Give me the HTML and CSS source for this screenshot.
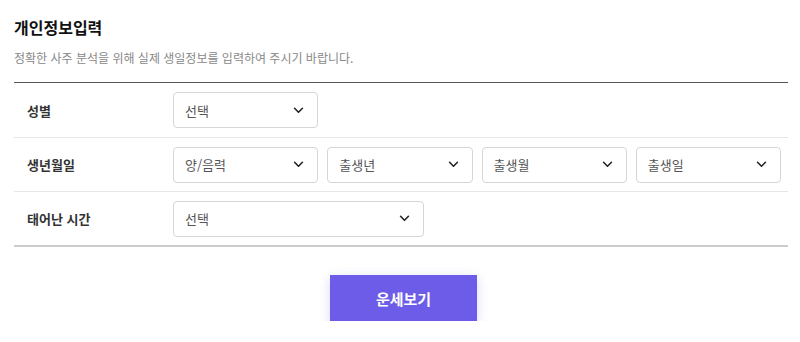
FILE: index.html
```html
<!DOCTYPE html>
<html lang="ko">
<head>
<meta charset="utf-8">
<link rel="stylesheet" href="styles.css">
</head>
<body>
<div class="wrap">
  <h2 class="title">개인정보입력</h2>
  <p class="desc">정확한 사주 분석을 위해 실제 생일정보를 입력하여 주시기 바랍니다.</p>
  <div class="table">
    <div class="row first">
      <div class="label">성별</div>
      <div class="fields">
        <div class="select w1"><span>선택</span><svg viewBox="0 0 12 8" class="chev"><path d="M1.5 1.5 L6 6 L10.5 1.5"/></svg></div>
      </div>
    </div>
    <div class="row">
      <div class="label">생년월일</div>
      <div class="fields four">
        <div class="select"><span>양/음력</span><svg viewBox="0 0 12 8" class="chev"><path d="M1.5 1.5 L6 6 L10.5 1.5"/></svg></div>
        <div class="select"><span>출생년</span><svg viewBox="0 0 12 8" class="chev"><path d="M1.5 1.5 L6 6 L10.5 1.5"/></svg></div>
        <div class="select"><span>출생월</span><svg viewBox="0 0 12 8" class="chev"><path d="M1.5 1.5 L6 6 L10.5 1.5"/></svg></div>
        <div class="select"><span>출생일</span><svg viewBox="0 0 12 8" class="chev"><path d="M1.5 1.5 L6 6 L10.5 1.5"/></svg></div>
      </div>
    </div>
    <div class="row last">
      <div class="label">태어난 시간</div>
      <div class="fields">
        <div class="select w2"><span>선택</span><svg viewBox="0 0 12 8" class="chev"><path d="M1.5 1.5 L6 6 L10.5 1.5"/></svg></div>
      </div>
    </div>
  </div>
  <div class="actions">
    <button class="btn">운세보기</button>
  </div>
</div>
</body>
</html>
```

FILE: styles.css
```css
* { box-sizing: border-box; }
html, body { margin: 0; padding: 0; background: #fff; }
body {
  font-family: "Noto Sans CJK KR", "Noto Sans", sans-serif;
  color: #222;
}
.wrap {
  padding: 16px 12px 0 14px;
}
.title {
  margin: 0;
  font-size: 16px;
  font-weight: 700;
  line-height: 22px;
  color: #111;
}
.desc {
  margin: 11px 0 0;
  font-size: 12px;
  line-height: 18px;
  color: #888;
}
.table {
  margin-top: 15px;
  border-top: 1px solid #555;
  border-bottom: 2px solid #ccc;
}
.row {
  display: flex;
  align-items: center;
  height: 54px;
  border-bottom: 1px solid #e6e6e6;
}
.row.first { height: 55px; }
.row.last { border-bottom: none; height: 53px; }
.label {
  width: 159px;
  padding-left: 13px;
  font-size: 13px;
  font-weight: 700;
  color: #333;
}
.fields {
  flex: 1;
  display: flex;
  gap: 9px;
  padding-right: 7px;
}
.fields.four .select { flex: 1; }
.select {
  height: 36px;
  border: 1px solid #d6d6d6;
  border-radius: 4px;
  display: flex;
  align-items: center;
  justify-content: space-between;
  padding: 0 13px 0 11px;
  font-size: 13px;
  color: #555;
}
.w1 { width: 145px; }
.w2 { width: 251px; }
.chev {
  width: 11px;
  height: 7px;
  fill: none;
  stroke: #222;
  stroke-width: 1.8;
  stroke-linecap: round;
  stroke-linejoin: round;
}
.actions {
  display: flex;
  justify-content: center;
  padding-top: 28px;
  padding-left: 5px;
}
.btn {
  width: 147px;
  height: 46px;
  border: none;
  background: #6c5ce7;
  color: #fff;
  font-family: inherit;
  font-size: 15px;
  font-weight: 700;
  box-shadow: 0 3px 10px rgba(108, 92, 231, 0.25);
}
```
